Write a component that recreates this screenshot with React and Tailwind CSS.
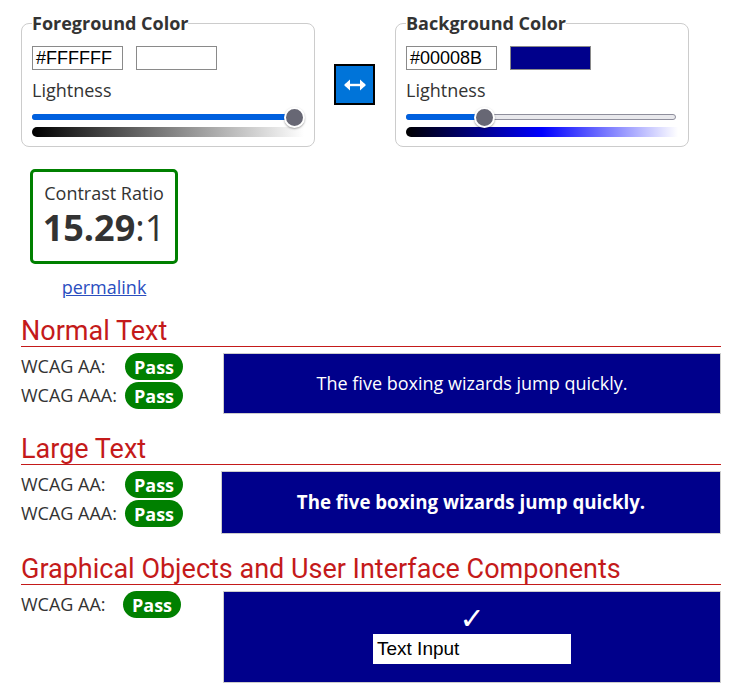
import React from 'react';

const Slider = ({ value, gradient }) => (
    <div className="w-[272px]">
        <div className="relative h-[20px]">
            <div className="absolute left-0 right-[2px] top-[7px] h-[6px] rounded-full bg-[#e9e9ed] border border-[#8f8f9d]" />
            <div
                className="absolute left-0 top-[7px] h-[6px] rounded-full bg-[#0060df]"
                style={{ width: `${value}%` }}
            />
            <div
                className="absolute top-0 w-[21px] h-[21px] -ml-[10px] rounded-full bg-[#676774] border-[2px] border-white shadow-[0_1px_2px_rgba(0,0,0,0.35)]"
                style={{ left: `${value}%` }}
            />
        </div>
        <div className="h-[10px] rounded-l-full" style={{ background: gradient }} />
    </div>
);

const ColorPanel = ({ title, hex, swatch, value, gradient }) => (
    <fieldset className="w-[294px] h-[136px] border border-[#cccccc] rounded-lg px-[10px] pt-[11px]">
        <legend className="font-bold text-[18px] leading-[24px] text-[#333]">{title}</legend>
        <div className="flex items-center gap-[13px]">
            <div className="w-[91px] h-[24px] border border-[#8a8a8a] px-[3px] font-['Liberation_Sans',sans-serif] text-[18px] leading-[22px] text-black">
                {hex}
            </div>
            <div className="w-[81px] h-[24px] border border-[#8a8a8a]" style={{ background: swatch }} />
        </div>
        <div className="mt-[7px] text-[18px] leading-[26px] text-[#333]">Lightness</div>
        <div className="mt-[4px]">
            <Slider value={value} gradient={gradient} />
        </div>
    </fieldset>
);

const Pass = () => (
    <span className="inline-flex items-center justify-center w-[58px] h-[27px] rounded-full bg-[#008000] text-white font-bold text-[18px] leading-none">
        Pass
    </span>
);

const Heading = ({ children }) => (
    <h2 className="font-['Roboto',sans-serif] text-[27px] leading-[30px] text-[#c41a1a] border-b border-[#c41a1a]">
        {children}
    </h2>
);

const Row = ({ label, w = 'w-[104px]' }) => (
    <div className="flex items-center h-[27px]">
        <span className={`${w} text-[18px] text-[#333]`}>{label}</span>
        <Pass />
    </div>
);

export default function App() {
    return (
        <div className="bg-white min-h-[692px] font-['Open_Sans',sans-serif] text-[#333] pl-[21px] w-[721px]">
            <div className="flex pt-[11px]">
                <ColorPanel
                    title="Foreground Color"
                    hex="#FFFFFF"
                    swatch="#ffffff"
                    value={96.3}
                    gradient="linear-gradient(to right, #000000, #ffffff)"
                />
                <button className="self-start ml-[19px] mr-[20px] mt-[53px] w-[41px] h-[41px] border-[2px] border-black bg-[#0074d9] flex items-center justify-center">
                    <svg width="22" height="12" viewBox="0 0 22 12">
                        <path d="M1 6h20" stroke="white" strokeWidth="2.4" />
                        <path d="M0 6l6-5.5v11z M22 6l-6-5.5v11z" fill="white" />
                    </svg>
                </button>
                <ColorPanel
                    title="Background Color"
                    hex="#00008B"
                    swatch="#00008b"
                    value={28.7}
                    gradient="linear-gradient(to right, #000000, #0000ff 50%, #ffffff)"
                />
            </div>

            <div className="mt-[22px] ml-[9px] w-[148px]">
                <div className="h-[95px] border-[3px] border-[#008000] rounded-[5px] flex flex-col items-center pt-[9px]">
                    <div className="text-[18px] leading-[24px]">Contrast Ratio</div>
                    <div className="text-[36px] leading-[44px] mt-[1px]">
                        <span className="font-bold">15.29</span>:1
                    </div>
                </div>
                <div className="text-center mt-[11px] text-[18px] leading-[24px]">
                    <a href="#" className="text-[#2a4ebf] underline">permalink</a>
                </div>
            </div>

            <div className="mt-[17px]">
                <Heading>Normal Text</Heading>
                <div className="flex mt-[6px]">
                    <div className="w-[202px] flex flex-col gap-[2px]">
                        <Row label="WCAG AA:" />
                        <Row label="WCAG AAA:" />
                    </div>
                    <div className="w-[498px] h-[61px] bg-[#00008b] border border-[#cccccc] flex items-center justify-center text-white text-[18px]">
                        The five boxing wizards jump quickly.
                    </div>
                </div>
            </div>

            <div className="mt-[20px]">
                <Heading>Large Text</Heading>
                <div className="flex mt-[6px]">
                    <div className="w-[200px] flex flex-col gap-[2px]">
                        <Row label="WCAG AA:" />
                        <Row label="WCAG AAA:" />
                    </div>
                    <div className="w-[500px] h-[63px] bg-[#00008b] border border-[#cccccc] flex items-center justify-center text-white text-[18.7px] font-bold">
                        The five boxing wizards jump quickly.
                    </div>
                </div>
            </div>

            <div className="mt-[20px]">
                <Heading>Graphical Objects and User Interface Components</Heading>
                <div className="flex mt-[6px]">
                    <div className="w-[202px]">
                        <Row label="WCAG AA:" w="w-[102px]" />
                    </div>
                    <div className="w-[498px] h-[92px] bg-[#00008b] border border-[#cccccc] flex flex-col items-center pt-[13px]">
                        <div className="h-[28px] text-white text-[30px] leading-[28px] font-['DejaVu_Sans',sans-serif]">✓</div>
                        <div className="mt-[1px] w-[198px] h-[30px] bg-white px-[4px] text-black text-[19px] leading-[30px] font-['Liberation_Sans',sans-serif]">
                            Text Input
                        </div>
                    </div>
                </div>
            </div>
        </div>
    );
}
